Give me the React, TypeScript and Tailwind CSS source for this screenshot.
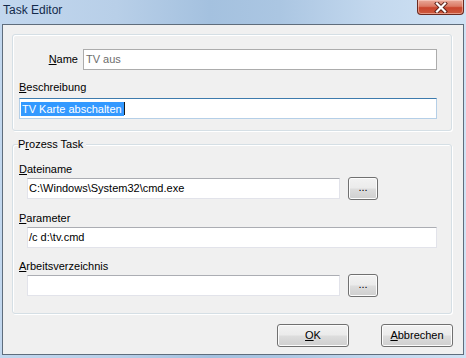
import type { ReactNode } from "react";

const font = "font-['Liberation_Sans',Arial,sans-serif]";

function Mn({ children }: { children: ReactNode }) {
  return <span className="underline underline-offset-[1px]">{children}</span>;
}

function Field({
  children,
  className = "",
  tone = "text-black",
  edge = "border-[#e2e3ea] border-t-[#abadb3]",
}: {
  children?: ReactNode;
  className?: string;
  tone?: string;
  edge?: string;
}) {
  return (
    <div className={`flex h-[21px] items-center border bg-white pl-[1px] text-[11px] ${edge} ${tone} ${className}`}>
      {children}
    </div>
  );
}

function Win7Button({ children, className = "" }: { children: ReactNode; className?: string }) {
  return (
    <button
      className={`flex h-[23px] items-center justify-center rounded-[3px] border border-[#707070] bg-[linear-gradient(180deg,#f2f2f2_0%,#ebebeb_48%,#dddddd_52%,#cfcfcf_100%)] text-[11px] text-black shadow-[inset_0_0_0_1px_#fcfcfc] ${className}`}
    >
      {children}
    </button>
  );
}

function CloseButton() {
  return (
    <div className="flex h-[15px] w-[47px] items-center justify-center self-start rounded-b-[4px] border border-t-0 border-[#6a2a20] bg-[linear-gradient(180deg,#e9a999_0%,#db7a64_45%,#c9452c_55%,#cc5a3f_100%)] shadow-[inset_0_0_0_1px_rgba(255,220,210,0.5)]">
      <svg width="14" height="11" viewBox="0 0 14 11">
        <path d="M3 1.5 L11 9.5 M11 1.5 L3 9.5" stroke="#5a2017" strokeWidth="4" strokeLinecap="square" />
        <path d="M3 1.5 L11 9.5 M11 1.5 L3 9.5" stroke="#ffffff" strokeWidth="2.2" strokeLinecap="square" />
      </svg>
    </div>
  );
}

export default function App() {
  return (
    <div
      className={`flex h-[358px] w-[466px] flex-col bg-[linear-gradient(90deg,#c2d7ee_0%,#b8cfe8_25%,#a4c1df_45%,#abc6e2_60%,#c3d8ee_80%,#d0e2f4_100%)] px-[2px] pb-[3px] ${font}`}
    >
      {/* title bar */}
      <div className="flex h-[24px] shrink-0 items-start justify-between">
        <span className="pl-[1px] pt-[3px] text-[12px] leading-[15px] text-[#132a4b]">Task Editor</span>
        <CloseButton />
      </div>

      {/* client area */}
      <div className="flex flex-1 flex-col border border-[#5f6d7c] bg-[#f0f0f0] text-[11px] text-black">
        {/* group 1 */}
        <div className="ml-[9px] mr-[11px] mt-[9px] flex flex-col rounded-[3px] border border-[#d5dfe5] px-[6px] pb-[11px] pt-[14px] shadow-[inset_1px_1px_0_#fff,1px_1px_0_#fff]">
          <div className="flex items-center">
            <span className="w-[59px] text-right leading-[13px]">
              <Mn>N</Mn>ame
            </span>
            <Field className="ml-[5px] w-[354px] pl-[2px]" tone="text-[#6d6d6d]" edge="border-[#acacac]">
              TV aus
            </Field>
          </div>
          <span className="mt-[11px] leading-[13px]">
            <Mn>B</Mn>eschreibung
          </span>
          <Field className="mt-[4px] w-[418px]" edge="border-[#b5cfe7] border-t-[#3d7bad]">
            <span className="inline-block shrink-0 whitespace-nowrap bg-[#3399ff] pl-[1px] pr-[2px] leading-[14px] text-white">
              TV Karte abschalten
            </span>
            <span className="h-[13px] w-[1px] shrink-0 bg-[#1a1a1a]" />
          </Field>
        </div>

        {/* group 2 */}
        <fieldset className="ml-[9px] mr-[11px] mt-[7px] flex flex-col rounded-[3px] border border-[#d5dfe5] px-[6px] pb-[16px] shadow-[inset_1px_1px_0_#fff,1px_1px_0_#fff]">
          <legend className="ml-[-1px] bg-[#f0f0f0] pr-[3px] leading-[13px]">
            P<Mn>r</Mn>ozess Task
          </legend>
          <span className="mt-[12px] leading-[13px]">
            <Mn>D</Mn>ateiname
          </span>
          <div className="mt-[1px] flex items-center">
            <Field className="ml-[8px] w-[313px]">C:\Windows\System32\cmd.exe</Field>
            <Win7Button className="ml-[8px] w-[30px] pb-[3px]">...</Win7Button>
          </div>
          <span className="mt-[12px] leading-[13px]">
            <Mn>P</Mn>arameter
          </span>
          <Field className="ml-[8px] mt-[2px] w-[410px]">/c d:\tv.cmd</Field>
          <span className="mt-[12px] leading-[13px]">
            <Mn>A</Mn>rbeitsverzeichnis
          </span>
          <div className="mt-[1px] flex items-center">
            <Field className="ml-[8px] w-[313px]" />
            <Win7Button className="ml-[8px] w-[30px] pb-[3px]">...</Win7Button>
          </div>
        </fieldset>

        {/* buttons */}
        <div className="mr-[10px] mt-[10px] flex justify-end gap-[32px]">
          <Win7Button className="w-[72px]">
            <Mn>O</Mn>K
          </Win7Button>
          <Win7Button className="w-[72px]">
            <Mn>A</Mn>bbrechen
          </Win7Button>
        </div>
      </div>
    </div>
  );
}
